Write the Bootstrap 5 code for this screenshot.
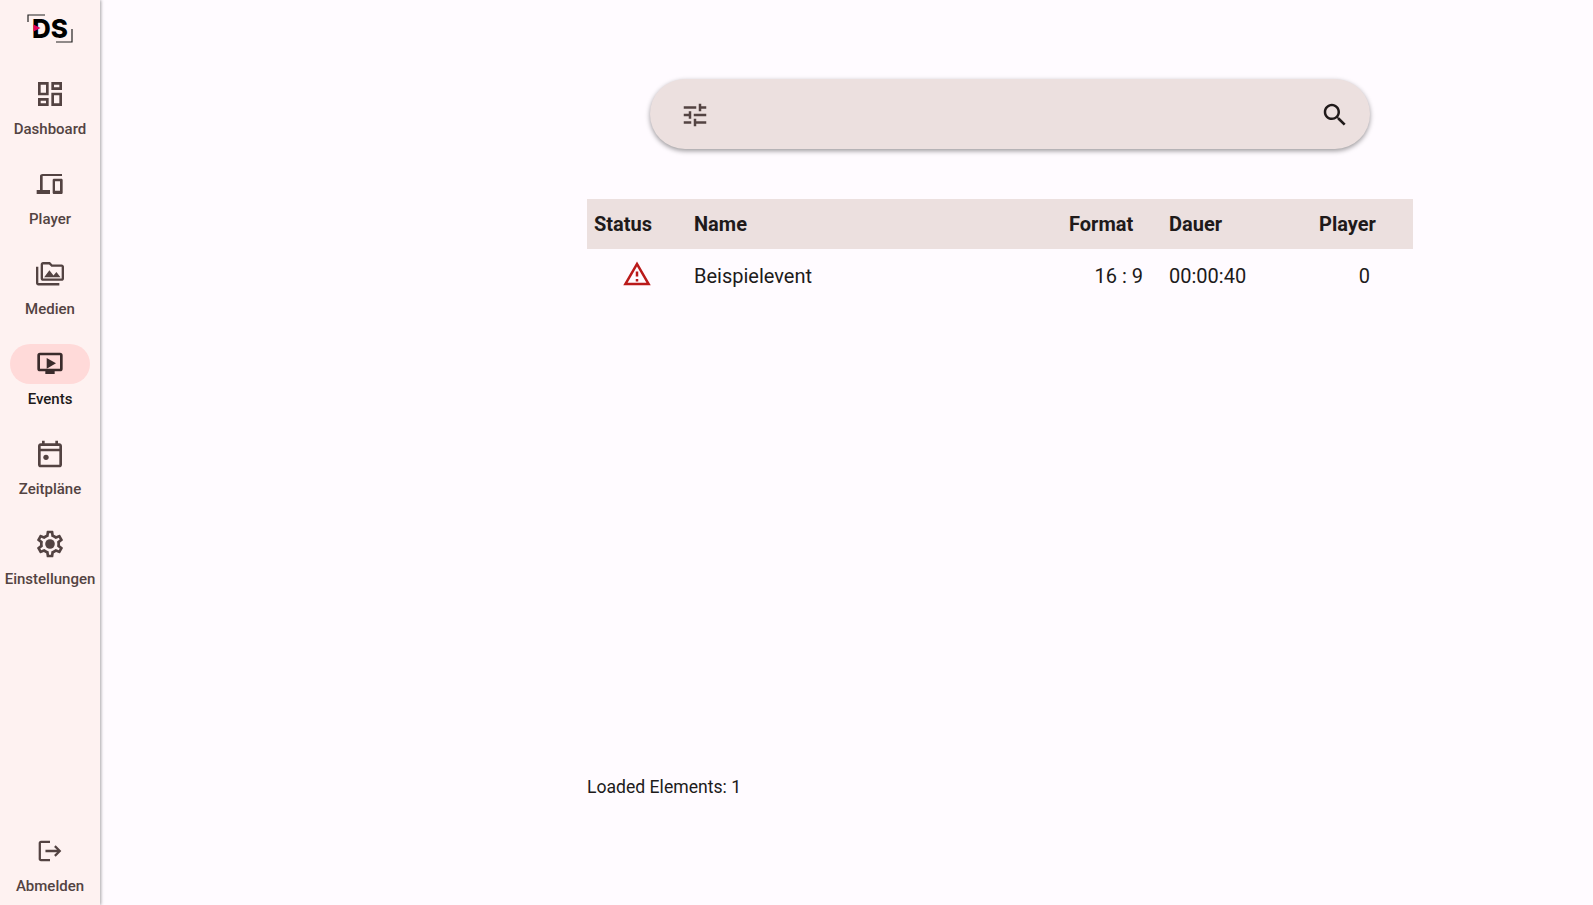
<!DOCTYPE html>
<html lang="de">
<head>
<meta charset="utf-8">
<title>Events</title>
<link href="https://cdn.jsdelivr.net/npm/bootstrap@5.3.0/dist/css/bootstrap.min.css" rel="stylesheet">
<style>
html,body{height:100%;}
body{font-family:Roboto,"Liberation Sans",sans-serif;background:#fffbff;color:#201a1a;overflow:hidden;}
.app-shell{height:905px;}
.side-rail{width:100px;flex:none;background:#fef2f1;box-shadow:1px 0 3px rgba(0,0,0,.35);z-index:2;}
.rail-logo{height:50px;padding-top:14px;}
.logo-box{position:relative;width:46px;height:30px;}
.logo-text{font-family:Inter,"Liberation Sans",sans-serif;font-weight:800;font-size:26px;line-height:30px;color:#000;letter-spacing:0;text-align:center;display:block;}
.logo-svg{position:absolute;left:0;top:0;}
.rail-item{height:90px;text-decoration:none;color:#534342;font-size:15px;font-weight:500;line-height:20px;}
.rail-first{margin-top:24px;}
.rail-pill{width:80px;height:40px;border-radius:20px;margin-bottom:5px;}
.rail-item.is-active{color:#201a1a;}
.rail-item.is-active .rail-pill{background:#ffdad9;}
.rail-item.is-active .rail-pill svg{fill:#3a2b2b;}
.rail-pill svg{width:32px;height:32px;fill:#534342;}
.rail-foot{height:74px;}
.main-pane{width:826px;margin-left:487px;padding-top:79px;}
.search-pill{width:720px;height:70px;margin-left:63px;border-radius:35px;background:#ece0df;box-shadow:0 2px 5px rgba(0,0,0,.4);padding:1px 20px 0 30px;}
.search-pill svg{width:30px;height:30px;}
.ic-tune{fill:#534342;}
.ic-search{fill:#201a1a;}
.data-table{margin-top:50px;margin-bottom:0;font-size:20px;table-layout:fixed;width:826px;--bs-table-bg:transparent;}
.data-table th{background:#ece0df;height:50px;padding:0 7px;font-weight:700;border:0;vertical-align:middle;color:#201a1a;}
.data-table td{height:53px;padding:0 7px;border:0;vertical-align:middle;color:#201a1a;}
.col-status{width:100px;}
.col-format{width:100px;}
.col-player{width:101px;}
.col-dauer{width:150px;}
.cell-format{text-align:right;padding-right:19px!important;}
.cell-player{text-align:right;padding-right:43px!important;}
.warn-ic{width:30px;height:30px;fill:#ba1a1a;display:block;margin:-4px auto 0;}
.loaded-line{margin-top:472px;font-size:17.6px;line-height:26px;color:#201a1a;}
</style>
</head>
<body>
<div class="app-shell d-flex">
  <nav class="side-rail d-flex flex-column">
    <div class="rail-logo d-flex justify-content-center">
      <div class="logo-box">
        <span class="logo-text">DS</span>
        <svg class="logo-svg" width="46" height="30" viewBox="0 0 46 30" fill="none">
          <path d="M1 8V1H18" stroke="#222" stroke-width="1.200"/>
          <path d="M45 15V28H29" stroke="#222" stroke-width="1.200"/>
          <path d="M6.500 10.500L13.500 14L6.500 17.500Z" fill="#e6005c"/>
        </svg>
      </div>
    </div>
    <a class="rail-item rail-first d-flex flex-column align-items-center" href="#">
      <span class="rail-pill d-flex align-items-center justify-content-center"><svg viewBox="0 0 24 24"><path d="M19 5v2h-4V5h4M9 5v6H5V5h4m10 8v6h-4v-6h4M9 17v2H5v-2h4M21 3h-8v6h8V3zM11 3H3v10h8V3zm10 8h-8v10h8V11zm-10 4H3v6h8v-6z"/></svg></span>
      <span>Dashboard</span>
    </a>
    <a class="rail-item d-flex flex-column align-items-center" href="#">
      <span class="rail-pill d-flex align-items-center justify-content-center"><svg viewBox="0 0 24 24"><path d="M6.500 6H21V4.500H6.500c-1.100 0-2 .7-2 1.500v10.500H2v3h10v-3H6.500V6zM20.500 8H15c-.55 0-1 .45-1 1v9.500c0 .55.45 1 1 1h5.500c.55 0 1-.45 1-1V9c0-.55-.45-1-1-1zm-1 9h-3.750v-7h3.750v7z"/></svg></span>
      <span>Player</span>
    </a>
    <a class="rail-item d-flex flex-column align-items-center" href="#">
      <span class="rail-pill d-flex align-items-center justify-content-center"><svg viewBox="0 0 24 24"><g transform="translate(1.500 1.300) scale(.875)"><path d="M2 6H0v5h.01L0 20c0 1.100.9 2 2 2h18v-2H2V6zm5 9h14l-3.500-4.500-2.500 3.010L11.500 9zM22 4h-8l-2-2H6c-1.100 0-1.990.9-1.990 2L4 16c0 1.100.9 2 2 2h16c1.100 0 2-.9 2-2V6c0-1.100-.9-2-2-2zm0 12H6V4h5.170l1.410 1.410.59.59H22v10z"/></g></svg></span>
      <span>Medien</span>
    </a>
    <a class="rail-item is-active d-flex flex-column align-items-center" href="#">
      <span class="rail-pill d-flex align-items-center justify-content-center"><svg viewBox="0 0 24 24"><path fill-rule="evenodd" d="M4.500 3.500h15a2 2 0 0 1 2 2v10a2 2 0 0 1-2 2h-4v2h-7v-2h-4a2 2 0 0 1-2-2v-10a2 2 0 0 1 2-2zm0 2v10h15v-10z"/><polygon points="9.500,7.500 16.500,11.500 9.500,15.500"/></svg></span>
      <span>Events</span>
    </a>
    <a class="rail-item d-flex flex-column align-items-center" href="#">
      <span class="rail-pill d-flex align-items-center justify-content-center"><svg viewBox="0 0 24 24"><path d="M19 4h-1V2h-2v2H8V2H6v2H5c-1.110 0-1.990.9-1.990 2L3 20c0 1.100.89 2 2 2h14c1.100 0 2-.9 2-2V6c0-1.100-.9-2-2-2zm0 16H5V10h14v10zm0-12H5V6h14v2z"/><circle cx="9" cy="14.500" r="2"/></svg></span>
      <span>Zeitpläne</span>
    </a>
    <a class="rail-item d-flex flex-column align-items-center" href="#">
      <span class="rail-pill d-flex align-items-center justify-content-center"><svg viewBox="0 0 24 24"><path d="M19.430 12.980c.04-.32.07-.64.07-.98 0-.34-.03-.66-.07-.98l2.110-1.650c.19-.15.24-.42.12-.64l-2-3.460c-.09-.16-.26-.25-.44-.25-.06 0-.12.01-.17.03l-2.490 1c-.52-.4-1.080-.73-1.690-.98l-.38-2.650C14.460 2.180 14.250 2 14 2h-4c-.25 0-.46.18-.49.42l-.38 2.650c-.61.25-1.170.59-1.690.98l-2.490-1c-.06-.02-.12-.03-.18-.03-.17 0-.34.09-.43.25l-2 3.460c-.13.22-.07.49.12.64l2.110 1.650c-.04.32-.07.65-.07.98 0 .33.03.66.07.98l-2.110 1.650c-.19.15-.24.42-.12.64l2 3.460c.09.16.26.25.44.25.06 0 .12-.01.17-.03l2.490-1c.52.4 1.080.73 1.690.98l.38 2.650c.03.24.24.42.49.42h4c.25 0 .46-.18.49-.42l.38-2.650c.61-.25 1.170-.59 1.690-.98l2.490 1c.06.02.12.03.18.03.17 0 .34-.09.43-.25l2-3.460c.12-.22.07-.49-.12-.64l-2.110-1.650zm-1.980-1.710c.04.31.05.52.05.73 0 .21-.02.43-.05.73l-.14 1.130.89.7 1.080.84-.7 1.210-1.270-.51-1.040-.42-.9.68c-.43.32-.84.56-1.250.73l-1.060.43-.16 1.130-.2 1.350h-1.400l-.19-1.350-.16-1.130-1.060-.43c-.43-.18-.83-.41-1.230-.71l-.91-.7-1.060.43-1.270.51-.7-1.210 1.080-.84.89-.7-.14-1.130c-.03-.31-.05-.54-.05-.74s.02-.43.05-.73l.14-1.130-.89-.7-1.080-.84.7-1.210 1.270.51 1.040.42.9-.68c.43-.32.84-.56 1.250-.73l1.060-.43.16-1.130.2-1.350h1.390l.19 1.350.16 1.130 1.060.43c.43.18.83.41 1.230.71l.91.7 1.060-.43 1.270-.51.7 1.210-1.070.85-.89.7.14 1.130z"/><circle cx="12" cy="12" r="3.600"/></svg></span>
      <span>Einstellungen</span>
    </a>
    <a class="rail-item rail-foot mt-auto d-flex flex-column align-items-center" href="#">
      <span class="rail-pill d-flex align-items-center justify-content-center"><svg viewBox="0 0 24 24"><g transform="translate(1.800 1.800) scale(.85)"><path d="M17 7l-1.410 1.410L18.170 11H8v2h10.170l-2.580 2.580L17 17l5-5zM4 5h8V3H4c-1.100 0-2 .9-2 2v14c0 1.100.9 2 2 2h8v-2H4V5z"/></g></svg></span>
      <span>Abmelden</span>
    </a>
  </nav>
  <main class="main-pane">
    <div class="search-pill d-flex align-items-center justify-content-between">
      <svg class="ic-tune" viewBox="0 0 24 24"><path d="M3 17v2h6v-2H3zM3 5v2h10V5H3zm10 16v-2h8v-2h-8v-2h-2v6h2zM7 9v2H3v2h4v2h2V9H7zm14 4v-2H11v2h10zm-6-4h2V7h4V5h-4V3h-2v6z"/></svg>
      <svg class="ic-search" viewBox="0 0 24 24"><path d="M15.500 14h-.79l-.28-.27C15.410 12.590 16 11.110 16 9.500 16 5.910 13.090 3 9.500 3S3 5.910 3 9.500 5.910 16 9.500 16c1.610 0 3.090-.59 4.230-1.570l.27.28v.79l5 4.990L20.490 19l-4.990-5zm-6 0C7.010 14 5 11.990 5 9.500S7.010 5 9.500 5 14 7.010 14 9.500 11.990 14 9.500 14z"/></svg>
    </div>
    <table class="table data-table">
      <thead>
        <tr>
          <th class="col-status">Status</th>
          <th>Name</th>
          <th class="col-format">Format</th>
          <th class="col-dauer">Dauer</th>
          <th class="col-player">Player</th>
        </tr>
      </thead>
      <tbody>
        <tr>
          <td><svg class="warn-ic" viewBox="0 0 24 24"><path d="M12 5.990L19.530 19H4.470L12 5.990M12 2L1 21h22L12 2zm1 14h-2v2h2v-2zm0-6h-2v4h2v-4z"/></svg></td>
          <td>Beispielevent</td>
          <td class="cell-format">16 : 9</td>
          <td>00:00:40</td>
          <td class="cell-player">0</td>
        </tr>
      </tbody>
    </table>
    <div class="loaded-line">Loaded Elements: 1</div>
  </main>
</div>
<script src="https://cdn.jsdelivr.net/npm/bootstrap@5.3.0/dist/js/bootstrap.bundle.min.js"></script>
</body>
</html>
